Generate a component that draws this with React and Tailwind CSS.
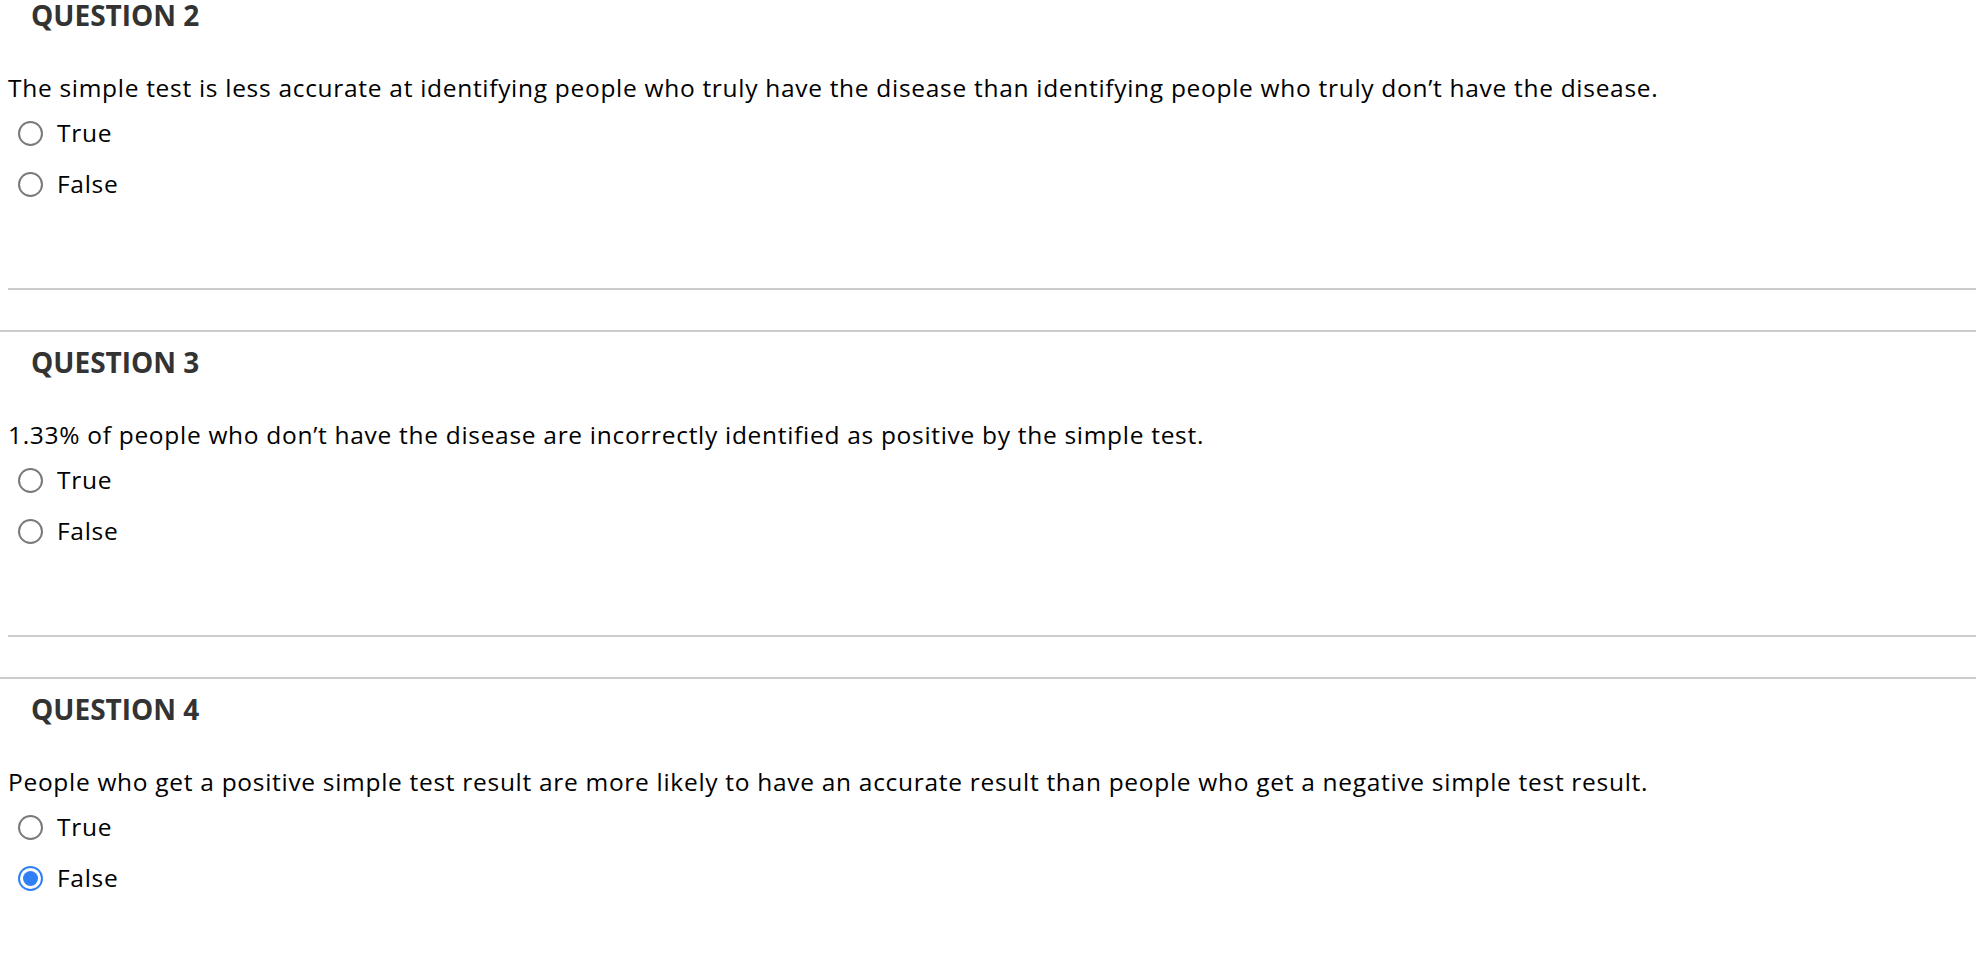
import React, { useState } from 'react';

const questions = [
  {
    id: 2,
    text: 'The simple test is less accurate at identifying people who truly have the disease than identifying people who truly don’t have the disease.',
    answer: null,
  },
  {
    id: 3,
    text: '1.33% of people who don’t have the disease are incorrectly identified as positive by the simple test.',
    answer: null,
  },
  {
    id: 4,
    text: 'People who get a positive simple test result are more likely to have an accurate result than people who get a negative simple test result.',
    answer: 'False',
  },
];

function Radio({ checked }) {
  if (checked) {
    return (
      <span className="w-[25px] h-[25px] rounded-full border-2 border-[#2f80f6] flex items-center justify-center shrink-0">
        <span className="w-[15px] h-[15px] rounded-full bg-[#2f80f6]" />
      </span>
    );
  }
  return <span className="w-[25px] h-[25px] rounded-full border-2 border-[#7a7a7a] bg-white shrink-0" />;
}

function Question({ q, last }) {
  const [value, setValue] = useState(q.answer);

  return (
    <div>
      <h3 className="pl-[31px] text-[28px] leading-[30px] font-bold text-[#333333]">QUESTION {q.id}</h3>
      <p className="mt-[42px] pl-[8px] text-[24.5px] tracking-[0.7px] leading-[32px] text-black">{q.text}</p>
      <div className="mt-[9px] flex flex-col gap-[11px]">
        {['True', 'False'].map((opt) => (
          <label key={opt} className="h-[40px] flex items-center pl-[18px] cursor-pointer" onClick={() => setValue(opt)}>
            <Radio checked={value === opt} />
            <span className="ml-[14px] text-[24.5px] tracking-[0.7px] leading-[40px] text-black">{opt}</span>
          </label>
        ))}
      </div>
      {!last && (
        <>
          <div className="mt-[84px] ml-[8px] h-[2px] bg-[#cccccc]" />
          <div className="mt-[40px] h-[2px] bg-[#cccccc]" />
          <div className="h-[15px]" />
        </>
      )}
    </div>
  );
}

export default function App() {
  return (
    <div className="min-h-[970px] bg-white overflow-hidden" style={{ fontFamily: '"Open Sans", sans-serif' }}>
      {questions.map((q, i) => (
        <Question key={q.id} q={q} last={i === questions.length - 1} />
      ))}
    </div>
  );
}
